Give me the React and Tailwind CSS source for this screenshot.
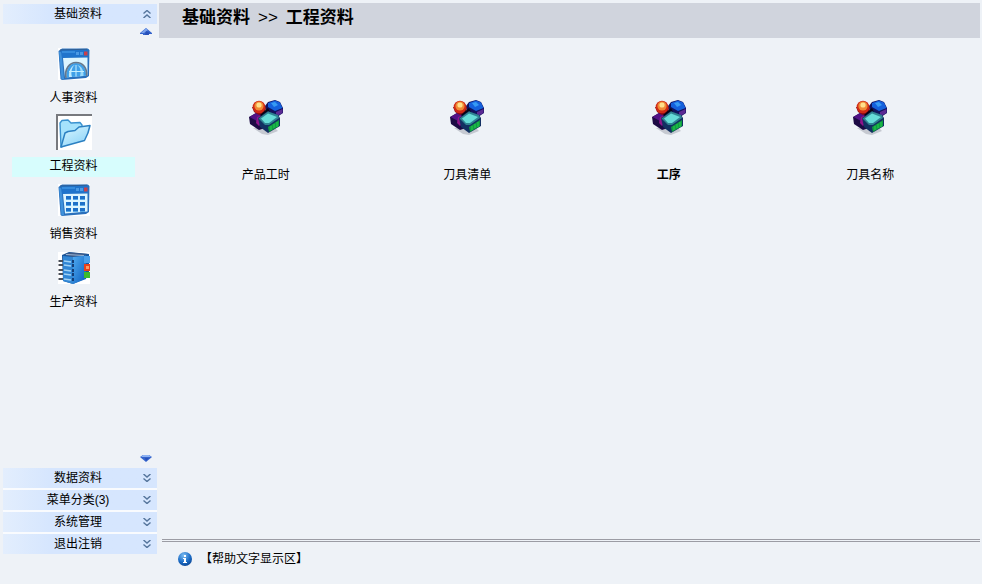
import React, { useState } from 'react';

const WindowFrame = ({ children }) => (
  <svg className="w-8 h-8" viewBox="0 0 32 32" fill="none">
    <rect width="32" height="32" fill="#fff" />
    <path d="M0.5 3 L4 0.5 L30 0.5 L31.5 2 L31 28 L28 30 L4 32 L2.5 31 Z" fill="#2a70bc" />
    <path d="M1 3.5 L3.5 4.5 L6 31 L3.5 31.5 Z" fill="#3f92dc" />
    <path d="M3 2 L30 1.5 V9.5 L4 10 Z" fill="#1f74cc" />
    <path d="M2 2 L29 1.2" stroke="#2f5f96" />
    <path d="M4 4 H17" stroke="#4da4ee" />
    <path d="M18 4 H21 V7 H18 Z M22 4 H25 V7 H22 Z" fill="#4b9ae4" />
    <path d="M26 3.5 H29.5 V7.5 H26 Z" fill="#c8404a" />
    <path d="M5 10 L29.5 9.5 V27.5 L7 29.5 Z" fill="#dcf5ff" />
    {children}
  </svg>
);

const GlobeIcon = () => (
  <WindowFrame>
    <path d="M8.5 29.5 C7.5 21 12 15 18 15 C24.5 15 28.5 20 28 27.8 Z" fill="#3fa0e8" />
    <path d="M14 29 C12.5 24 14 18.5 17 17 C13 18 10.5 23 11 29 Z" fill="#bdeaff" />
    <path d="M22 28.3 C23.5 23 22 18.5 19 17 C23.5 18 26 22 25.5 28 Z" fill="#9bdafa" />
    <path d="M18 28.5 V17 M11 23.5 H26" stroke="#c5efff" strokeWidth="1" />
    <path d="M8 29.8 C6.5 20.5 11.5 14.5 18 14.5 C25 14.5 29.2 20 28.6 28" stroke="#65788c" strokeWidth="1.7" />
  </WindowFrame>
);

const CalendarIcon = () => (
  <WindowFrame>
    {[12, 18, 24].map((y) =>
      [8, 15, 22].map((x) => (
        <g key={`${x}-${y}`}>
          <rect x={x} y={y} width="5" height="4" fill="#1d70c8" />
          <path d={`M${x} ${y + 3.5} h5`} stroke="#58a8e6" />
        </g>
      ))
    )}
  </WindowFrame>
);

const FolderIcon = () => (
  <svg className="w-8 h-8" viewBox="0 0 32 32" fill="none">
    <defs>
      <linearGradient id="folderFill" x1="0" y1="0" x2="0.7" y2="1">
        <stop offset="0" stopColor="#dcf8ff" />
        <stop offset="1" stopColor="#8fd4f8" />
      </linearGradient>
    </defs>
    <path d="M1 6 L3 3.5 L9 3 L12 6 L21 5.5 L23 8 V13 L8 27 L2 30 Z" fill="#a5e2fc" stroke="#3a92d0" strokeWidth="1.4" strokeLinejoin="round" />
    <path d="M6 16 L9 14.5 L16 13.5 L20 10 L31 8.5 C30 14 28 19 25.5 23.5 L2 30 Z" fill="url(#folderFill)" stroke="#2c80c2" strokeWidth="1.5" strokeLinejoin="round" />
  </svg>
);

const NotebookIcon = () => (
  <svg className="w-8 h-8" viewBox="0 0 32 32" fill="none">
    <defs>
      <linearGradient id="coverFill" x1="0" y1="0" x2="1" y2="1">
        <stop offset="0" stopColor="#4fabf2" />
        <stop offset="1" stopColor="#0b5cbc" />
      </linearGradient>
    </defs>
    <rect width="32" height="32" fill="#fff" />
    <path d="M4 3 L11 0 L31 2 V25 L15 32 L5 29 Z" fill="#17569e" />
    <path d="M6 2.5 L12 0.5 L30 2 L15 5 Z" fill="#3e5a86" />
    <path d="M8 2.5 L26 3.5" stroke="#9cb8d6" />
    <path d="M15 5 L28 3.5 V27 L15 32 Z" fill="url(#coverFill)" />
    <path d="M5 4 L15 5 V32 L5 29 Z" fill="#3186d4" />
    <path d="M26 4 H32 V11 H26 Z" fill="#4a9fea" />
    <path d="M26 12 H32 V19 H26 Z" fill="#e9401c" />
    <path d="M28 14 H31 V17 H28 Z" fill="#ff9a62" />
    <path d="M26 20 H32 V26 H26 Z" fill="#3dbb2c" />
    {[9, 13, 18, 22, 27].map((y) => (
      <g key={y}>
        <path d={`M0.5 ${y} H5`} stroke="#4a505a" strokeWidth="2" />
        <path d={`M6 ${y} L13 ${y + 1}`} stroke="#9fd2f6" strokeWidth="1.4" />
        <rect x="14" y={y - 1} width="2" height="3" fill="#143e78" />
      </g>
    ))}
  </svg>
);

const BlocksIcon = () => (
  <svg className="w-9 h-9" viewBox="0 0 36 36" fill="none">
    <path d="M5 29 L14 35 L20 36 L30 32 L26 28 Z" fill="#c5c9d1" />
    {/* violet block */}
    <path d="M1 18 L8 14 L20 15 V28 L11 31 L2 25 Z" fill="#1c0a44" />
    <path d="M1.5 18 L8 14 L14 16 L9 22 Z" fill="#521286" />
    <path d="M9 18 L14 16 V24 L11 27 L8 24 Z" fill="#8f138a" />
    {/* blue block */}
    <path d="M17 7 L20 3 L27 1 L32 3 L35 9 V14 L29 18 L18 14 Z" fill="#11125e" />
    <path d="M20 4 L27 1.5 L32 3.5 L34.5 9 L27 12 L20 8 Z" fill="#1560dc" />
    <path d="M23 4 L27 3 L30 6 L26 8 Z" fill="#369af4" />
    <path d="M28 13 L34.5 10 V14 L28 17.5 Z" fill="#5c2a94" />
    {/* red ball */}
    <path d="M4 8 L18 8 L17 14 L11 16 L6 13 Z" fill="#8a0a12" />
    <circle cx="11" cy="8" r="6.3" fill="#cf2a16" />
    <circle cx="11" cy="7" r="4.6" fill="#f08a34" />
    <circle cx="11" cy="6" r="2.6" fill="#ffe08a" />
    <path d="M12 16 L20 9 L22 13 L15 19 Z" fill="#060516" />
    {/* teal block */}
    <path d="M10 19 L20 12 L30 16 L32 19 V27 L20 34 L12 28 Z" fill="#123062" />
    <path d="M10.5 19.5 L20 12.5 L30 16 L31 19 L21 26 L17 26 Z" fill="#2f8292" />
    <path d="M13 19.5 L20 14.5 L29 18 L21 24 L17 24 Z" fill="#66dcd8" />
    <path d="M20 28 L31 21 V27 L21 33 Z" fill="#109c42" />
    <path d="M23 27 V31 M26 25 V29 M29 23 V28" stroke="#25d04a" />
  </svg>
);

const Chevrons = ({ up }) => (
  <svg className={up ? 'w-2 h-2 rotate-180' : 'w-2 h-2'} viewBox="0 0 8 8" fill="none" stroke="#55759c" strokeWidth="1.4">
    <path d="M0.5 0 L4 3 L7.5 0 M0.5 4.5 L4 7.5 L7.5 4.5" />
  </svg>
);

const ScrollUp = () => (
  <svg className="w-3 h-2" viewBox="0 0 12 8">
    <path d="M6 0 L12 5 V6 H9 V7 H3 V6 H0 V5 Z" fill="#3464cc" />
    <path d="M6 0 L8 2 L4 5 H1 Z" fill="#7ba2ec" />
    <path d="M6 3 L10 5 L8 7 H5 Z" fill="#2850b8" />
  </svg>
);

const ScrollDown = () => (
  <svg className="w-3 h-2" viewBox="0 0 12 8">
    <path d="M3 1 H9 L12 3 L6 8 L0 3 Z" fill="#3464cc" />
    <path d="M3 1 H9 L11 3 H1 Z" fill="#8db2f2" />
    <path d="M5 4 H9 L6 7 Z" fill="#2850b8" />
  </svg>
);

const InfoIcon = () => (
  <svg className="w-[14px] h-[14px]" viewBox="0 0 14 14">
    <defs>
      <radialGradient id="infoFill" cx="0.4" cy="0.25" r="0.8">
        <stop offset="0" stopColor="#7dbdf2" />
        <stop offset="0.6" stopColor="#1b6cc6" />
        <stop offset="1" stopColor="#0a4492" />
      </radialGradient>
    </defs>
    <circle cx="7" cy="7" r="7" fill="url(#infoFill)" />
    <rect x="6" y="3" width="2" height="2" fill="#fff" />
    <path d="M5 6 H8 V10 H9 V11 H5 V10 H6 V7 H5 Z" fill="#fff" />
  </svg>
);

const sideItems = [
  { name: '人事资料', Icon: GlobeIcon },
  { name: '工程资料', Icon: FolderIcon },
  { name: '销售资料', Icon: CalendarIcon },
  { name: '生产资料', Icon: NotebookIcon },
];

const groups = ['数据资料', '菜单分类(3)', '系统管理', '退出注销'];

const modules = [
  { name: '产品工时' },
  { name: '刀具清单' },
  { name: '工序', bold: true },
  { name: '刀具名称' },
];

const GroupBar = ({ name, up }) => (
  <button
    type="button"
    className="flex w-full h-5 items-center bg-linear-to-r from-[#e3eefd] to-[#d6e6fe] to-30% pl-[10px] pr-[6px] cursor-pointer"
  >
    <span className="flex-1 text-center leading-5">{name}</span>
    <Chevrons up={up} />
  </button>
);

const App = () => {
  const [selected, setSelected] = useState('工程资料');

  return (
    <div className="flex min-h-screen bg-[#eef2f7] text-black text-xs font-['Liberation_Sans','Noto_Sans_CJK_SC',sans-serif]">
      {/* Menu */}
      <aside className="flex w-[159px] shrink-0 flex-col pl-[3px] pr-[2px] pt-1 pb-[30px]">
        <GroupBar name="基础资料" up />
        <button type="button" aria-label="向上滚动" className="mt-1 mr-[5px] self-end cursor-pointer">
          <ScrollUp />
        </button>

        <nav className="mt-[10px] ml-[9px] mr-[22px] flex flex-col gap-[5px]">
          {sideItems.map(({ name, Icon }) => (
            <button
              key={name}
              type="button"
              onClick={() => setSelected(name)}
              className="flex flex-col items-center gap-[7px] cursor-pointer"
            >
              <span
                className={
                  selected === name
                    ? 'flex w-9 h-9 items-center justify-center bg-white border-t-2 border-l-2 border-[#77797e]'
                    : 'flex w-9 h-9 items-center justify-center'
                }
              >
                <Icon />
              </span>
              <span className={selected === name ? 'w-full h-5 leading-[18px] bg-[#d7fdfd]' : 'w-full h-5 leading-[18px]'}>
                {name}
              </span>
            </button>
          ))}
        </nav>

        <button type="button" aria-label="向下滚动" className="mt-auto mb-[6px] mr-[5px] self-end cursor-pointer">
          <ScrollDown />
        </button>
        <div className="flex flex-col gap-[2px] bg-[#f9fbfe]">
          {groups.map((name) => (
            <GroupBar key={name} name={name} />
          ))}
        </div>
      </aside>

      {/* Content */}
      <main className="flex flex-1 flex-col pt-[3px] pr-[2px]">
        <h1 className="flex h-[35px] items-center gap-2 bg-[#d0d4dd] pl-[23px] pb-[5px] text-[17px] leading-6 font-bold">
          <span>基础资料</span>
          <span className="font-normal">&gt;&gt;</span>
          <span>工程资料</span>
        </h1>

        <div className="grid grid-cols-4 pt-[61px] pl-[6px] pr-[9px]">
          {modules.map(({ name, bold }) => (
            <a key={name} href="#" className="flex flex-col items-center gap-8">
              <BlocksIcon />
              <span className={bold ? 'leading-4 font-bold' : 'leading-4'}>{name}</span>
            </a>
          ))}
        </div>

        <footer className="mt-auto ml-[3px] flex items-center gap-2 border-t-3 border-double border-[#9b9ca4] pt-[9px] pb-[17px] pl-4">
          <InfoIcon />
          <span className="leading-4">【帮助文字显示区】</span>
        </footer>
      </main>
    </div>
  );
};

export default App;
